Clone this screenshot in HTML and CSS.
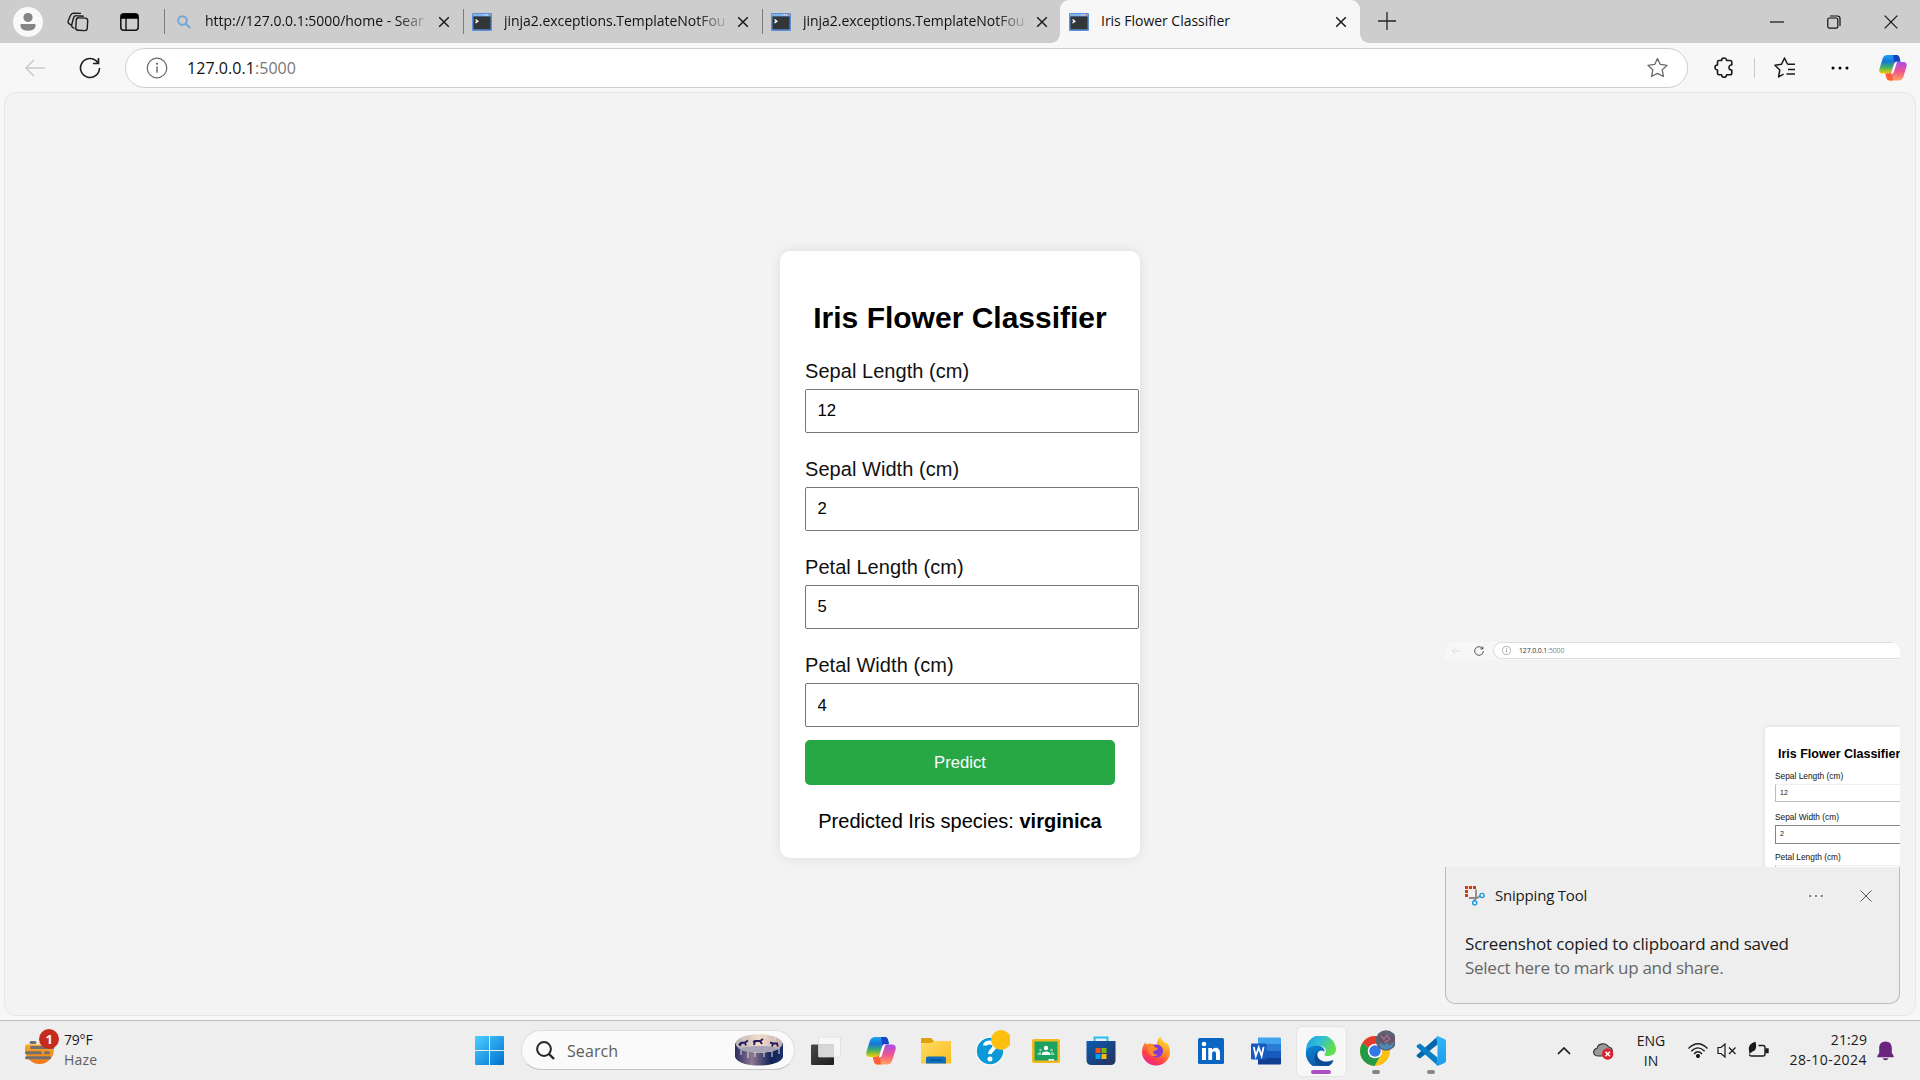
FILE: index.html
```html
<!DOCTYPE html>
<html lang="en">
<head>
<meta charset="utf-8">
<title>Iris Flower Classifier</title>
<link rel="stylesheet" href="styles.css">
</head>
<body>
<svg class="defs" width="0" height="0" aria-hidden="true">
  <defs>
    <linearGradient id="cpA" x1="0" y1="0" x2="0" y2="1"><stop offset="0" stop-color="#1ba3f0"/><stop offset=".35" stop-color="#1478d8"/><stop offset=".65" stop-color="#3fb06a"/><stop offset="1" stop-color="#f4d000"/></linearGradient>
    <linearGradient id="cpB" x1="0" y1="0" x2="0" y2="1"><stop offset="0" stop-color="#a84df0"/><stop offset=".5" stop-color="#ee5590"/><stop offset="1" stop-color="#ffa45c"/></linearGradient>
    <linearGradient id="winG" x1="0" y1="0" x2="1" y2="1"><stop offset="0" stop-color="#4cd0ff"/><stop offset="1" stop-color="#006fd0"/></linearGradient>
    <linearGradient id="sunG" x1="0" y1="0" x2="0" y2="1"><stop offset="0" stop-color="#f8c030"/><stop offset="1" stop-color="#f07818"/></linearGradient>
    <linearGradient id="tubG" x1="0" y1="0" x2="1" y2="0"><stop offset="0" stop-color="#2a2c60"/><stop offset=".35" stop-color="#8c7890"/><stop offset=".75" stop-color="#102458"/><stop offset="1" stop-color="#1c3068"/></linearGradient>
    <linearGradient id="rimG" x1="0" y1="0" x2="1" y2="0"><stop offset="0" stop-color="#b8b0b4"/><stop offset=".5" stop-color="#f2dcc8"/><stop offset="1" stop-color="#c4b0b0"/></linearGradient>
    <linearGradient id="folG" x1="0" y1="0" x2="1" y2="1"><stop offset="0" stop-color="#ffdb62"/><stop offset="1" stop-color="#fcbd22"/></linearGradient>
    <linearGradient id="stoG" x1="0" y1="0" x2="1" y2="1"><stop offset="0" stop-color="#0a5cb0"/><stop offset="1" stop-color="#27305c"/></linearGradient>
    <linearGradient id="tvG" x1="0" y1="0" x2="1" y2="1"><stop offset="0" stop-color="#4a4a4a"/><stop offset="1" stop-color="#1c1c1c"/></linearGradient>
    <linearGradient id="ffG" x1=".8" y1="0" x2=".25" y2="1"><stop offset="0" stop-color="#ffe63c"/><stop offset=".4" stop-color="#ff9422"/><stop offset=".75" stop-color="#ff3c50"/><stop offset="1" stop-color="#e8208c"/></linearGradient>
    <linearGradient id="edA" x1="0" y1="0" x2="1" y2=".4"><stop offset="0" stop-color="#1c98e0"/><stop offset=".5" stop-color="#30c0d8"/><stop offset="1" stop-color="#62e04a"/></linearGradient>
    <linearGradient id="edB" x1="0" y1="0" x2=".6" y2="1"><stop offset="0" stop-color="#0a88d8"/><stop offset="1" stop-color="#0f4f9c"/></linearGradient>
    <linearGradient id="vsG" x1="0" y1="0" x2="0" y2="1"><stop offset="0" stop-color="#32b4f6"/><stop offset="1" stop-color="#1e9cee"/></linearGradient>
    <symbol id="copilot" viewBox="0 0 30 28">
      <path d="M9 0h9.500c2 0 3 1.200 3.500 3l1 4h-3.500c-1.600 0-2.600.800-3.100 2.500L13.500 17c-.7 2.200-1.900 3-4 3H4c-3 0-4.400-2-3.600-5L3.600 4.500C4.500 1.500 6.300 0 9 0z" fill="url(#cpA)"/>
      <path d="M15 0h4c1.600 0 2.600 1.200 3 3l1 4.200h-3.500c-1.600 0-2.500.8-3 2.300z" fill="#1644c4"/>
      <path d="M21 27.500h-9.500c-2 0-3-1.200-3.500-3L6.800 20h3.100c1.900 0 3.100-1 3.700-3L16 10.500C16.600 8.500 17.600 7.500 20 7.500h6c3 0 4.400 2 3.600 5L26.400 23c-.9 3-2.700 4.500-5.400 4.500z" fill="url(#cpB)"/>
      <path d="M15 27.500h-3.500c-2 0-3-1.200-3.500-3L6.800 20h3.100c1.900 0 3.100-1 3.700-3z" fill="#ff6038"/>
      <path d="M16.300 9.500c.5-1.600 1.500-2.400 3.200-2.400L16 18c-.6 1.800-1.600 2.500-3.300 2.500z" fill="#fff"/>
    </symbol>
    <symbol id="term" viewBox="0 0 20 18">
      <rect width="20" height="18" rx="1" fill="#5b8fd6"/><rect x="1.500" y="3.500" width="17" height="12.800" fill="#333638"/>
      <path d="M1 1h18v2H1z" fill="#86b3ea"/><path d="M12.500 1.200h1.500v1.300h-1.500zM15 1.200h1v1.300h-1z" fill="#dfe9f7"/><path d="M17 1.200h1.600v1.300H17z" fill="#e66a6a"/>
      <path d="M3.500 6.500l2.300 1.700-2.300 1.700" fill="none" stroke="#fff" stroke-width="1.400"/>
    </symbol>
    <symbol id="x" viewBox="0 0 12 12"><path d="M1.200 1.200l9.600 9.600M10.800 1.200l-9.600 9.600" fill="none" stroke="currentColor" stroke-width="1.500"/></symbol>
    <symbol id="back" viewBox="0 0 20 18"><path d="M20 9H1M9 .8L1 9l8 8.200" fill="none" stroke="#c9c9c9" stroke-width="1.400"/></symbol>
    <symbol id="reload" viewBox="0 0 22 22"><path d="M20.500 11a9.500 9.500 0 1 1-3.500-7.400L19.300 6M19.500 1v5.500H14" fill="none" stroke="#1d1d1d" stroke-width="1.600"/></symbol>
    <symbol id="info" viewBox="0 0 22 22"><circle cx="11" cy="11" r="9.800" fill="none" stroke="#666" stroke-width="1.200"/><path d="M11 9.500v6.200" stroke="#555" stroke-width="1.300"/><circle cx="11" cy="6.800" r="1" fill="#555"/></symbol>
  </defs>
</svg>

<header class="tabstrip">
  <div class="lead">
    <svg class="avatar" viewBox="0 0 30 30"><circle cx="15" cy="15" r="15" fill="#f9f9f9"/><circle cx="15" cy="10.500" r="4.600" fill="#858585"/><path d="M7.500 17h15v2c0 3-3.500 4.700-7.500 4.700s-7.500-1.700-7.500-4.700z" fill="#858585"/></svg>
    <svg class="spaces" viewBox="0 0 22 20" fill="none" stroke="#1c1c1c" stroke-width="1.400"><rect x="9" y="6" width="11.500" height="12.500" rx="2.500" transform="rotate(3 15 12)"/><path d="M7.500 16.500l-1.500-.8C4.800 15 4.400 14 4.700 12.800L6.400 6.300C6.800 4.500 8 3.500 9.800 3.700l7 .6"/><path d="M4.200 13.200l-1.600-1C1.200 11.300.8 10 1.300 8.700L3.200 4C4 2 5 1.100 7 1.100l7 .3"/></svg>
    <svg class="tabmenu" viewBox="0 0 19 18"><rect x=".8" y=".8" width="17.400" height="16.400" rx="3" fill="none" stroke="#111" stroke-width="1.500"/><path d="M1 5.800V3.500Q1 1 3.500 1h12Q18 1 18 3.500v2.300z"/><path d="M6 5v12" stroke="#111" stroke-width="1.400"/></svg>
  </div>
  <div class="tab first">
    <svg class="fav search" viewBox="0 0 14 14" fill="none" stroke="#72a5d6" stroke-width="1.900"><circle cx="5.500" cy="5.500" r="4.300"/><path d="M8.700 8.700l4.500 4.500"/></svg>
    <span class="ttl long">http://127.0.0.1:5000/home - Sear</span>
    <svg class="close"><use href="#x"/></svg>
  </div>
  <div class="tab">
    <svg class="fav"><use href="#term"/></svg>
    <span class="ttl long">jinja2.exceptions.TemplateNotFou</span>
    <svg class="close"><use href="#x"/></svg>
  </div>
  <div class="tab">
    <svg class="fav"><use href="#term"/></svg>
    <span class="ttl long">jinja2.exceptions.TemplateNotFou</span>
    <svg class="close"><use href="#x"/></svg>
  </div>
  <div class="tab active">
    <svg class="fav"><use href="#term"/></svg>
    <span class="ttl">Iris Flower Classifier</span>
    <svg class="close"><use href="#x"/></svg>
  </div>
  <svg class="plus" viewBox="0 0 18 18"><path d="M9 0v18M0 9h18" stroke="#222" stroke-width="1.300"/></svg>
  <div class="wincontrols">
    <svg viewBox="0 0 14 14"><path d="M0 7h14" stroke="#111" stroke-width="1.200"/></svg>
    <svg viewBox="0 0 14 14" fill="none" stroke="#111" stroke-width="1.200"><rect x=".8" y="3" width="10" height="10.200" rx="1.600"/><path d="M3 1h7.500Q13 1 13 3.500V11"/></svg>
    <svg viewBox="0 0 14 14" fill="none" stroke="#111" stroke-width="1.200"><path d="M.7.700l12.600 12.600M13.300.7L.7 13.300"/></svg>
  </div>
</header>

<nav class="toolbar">
  <svg class="nav-back"><use href="#back"/></svg>
  <svg class="nav-reload"><use href="#reload"/></svg>
  <div class="address">
    <svg class="info"><use href="#info"/></svg>
    <span class="url">127.0.0.1<i>:5000</i></span>
    <svg class="star" viewBox="0 0 22 21" fill="none" stroke="#6a6a6a" stroke-width="1.400" stroke-linejoin="round"><path d="M11 1l3 6.300 7 .9-5.100 4.800 1.300 6.900L11 16.600l-6.200 3.300 1.300-6.900L1 8.200l7-.9z"/></svg>
  </div>
  <svg class="puzzle" viewBox="0 0 20 21" fill="none" stroke="#1a1a1a" stroke-width="1.600" stroke-linejoin="round"><path d="M3.500 5q0-1.500 1.500-1.500h2.600a2.500 2.500 0 0 1 5 0H16q1.800 0 1.800 1.800V8h-1a2.600 2.600 0 0 0 0 5h1v3q0 1.800-1.800 1.800h-3.400a2.500 2.500 0 0 1-5 0H5q-1.500 0-1.500-1.500v-3.300a2.500 2.500 0 0 1 0-5z"/></svg>
  <i class="tsep"></i>
  <svg class="favs" viewBox="0 0 22 21" fill="none" stroke="#1a1a1a" stroke-width="1.500" stroke-linejoin="round"><path d="M13.500 7.300L10.500 1 7.500 7.300.9 8.200 5.800 13l-1.200 6.900 5-2.700M13.500 7.300H21M14 12.500h7M12.500 17h8.500"/></svg>
  <svg class="more" viewBox="0 0 18 4"><circle cx="2" cy="2" r="1.500"/><circle cx="9" cy="2" r="1.500"/><circle cx="16" cy="2" r="1.500"/></svg>
  <svg class="cp"><use href="#copilot"/></svg>
</nav>

<main class="viewport">
  <section class="card">
    <h1>Iris Flower Classifier</h1>
    <form>
      <label>Sepal Length (cm)</label><input type="text" value="12">
      <label>Sepal Width (cm)</label><input type="text" value="2">
      <label>Petal Length (cm)</label><input type="text" value="5">
      <label>Petal Width (cm)</label><input type="text" value="4">
      <button type="button">Predict</button>
    </form>
    <p class="result">Predicted Iris species: <b>virginica</b></p>
  </section>
</main>

<footer class="taskbar">
  <div class="weather">
    <svg viewBox="0 0 35 36"><circle cx="14.500" cy="20.500" r="14.500" fill="url(#sunG)"/><path d="M0 0h35v15.500H0z" fill="#eee"/><path d="M6 13.500h4M6.500 18.500H28M1.500 23.700h14M20.500 23.700h3M1.500 28.700h23" stroke="#707070" stroke-width="3" stroke-linecap="round"/><circle cx="24" cy="10" r="10" fill="#c52b1e"/><text x="24" y="15" text-anchor="middle">1</text></svg>
    <div><span class="deg">79°F</span><span class="haze">Haze</span></div>
  </div>
  <svg class="start" viewBox="0 0 29 29"><path d="M1 0h13v14H0V1q0-1 1-1zM15 0h13q1 0 1 1v13H15zM0 15h14v14H1q-1 0-1-1zM15 15h14v13q0 1-1 1H15z" fill="url(#winG)"/></svg>
  <div class="searchbox">
    <svg class="lens" viewBox="0 0 19 19" fill="none" stroke="#262626" stroke-width="2"><circle cx="8" cy="8" r="6.900"/><path d="M13 13l5 5" stroke-width="2.400"/></svg>
    <span>Search</span>
    <svg class="tub" viewBox="0 0 48 32"><path d="M0 9v14c2 6 13 8.500 24 8.500S46 29 48 23V9z" fill="url(#tubG)"/><ellipse cx="24" cy="9.500" rx="23.500" ry="9.300" fill="url(#rimG)"/><path d="M3 14.500Q10 12 24 12t21 2.500Q38 18.500 24 18.500T3 14.500z" fill="#a9a5b8"/><path d="M6 16v5M13 18v6M20 18v5M29 18v5M37 17v6M44 14v6M17 1v3M31 1v3M9 3v3M40 3v3" stroke="#e4dfe2"/><path d="M4 11l2-2 4-.5 3-2M6 9l-1 3M10 9l1 2.500M18 8l2-1h5l3-2M20 7l-1 4M25 7l2 3M35 8.500l3 1h5M38 10l-1 2.500M42 10l1 2.500" stroke="#251c60" stroke-width="1.900" fill="none"/></svg>
  </div>
  <div class="apps">
    <div class="app"><svg viewBox="0 0 30 28"><rect y="7.500" width="23" height="20.500" rx="1" fill="url(#tvG)"/><path d="M7.500 7.500H23V20H7.500z" fill="#a7a7a7"/><rect x="7.500" width="22" height="20" rx="1" fill="#fff" fill-opacity=".55" stroke="#dadada" stroke-width=".7"/></svg></div>
    <div class="app"><svg viewBox="0 0 30 28"><use href="#copilot"/></svg></div>
    <div class="app"><svg viewBox="0 0 30 27"><path d="M0 1.500Q0 .5 1 .5h9l3 3h16q1 0 1 1V10H0z" fill="#dfa008"/><path d="M0 5.500h10l3-2h16q1 0 1 1v21.500H0z" fill="url(#folG)"/><path d="M5 26v-5q0-2 2-2h16q2 0 2 2v5z" fill="#0d6fc0"/><path d="M9 22.700h12" stroke="#07457f"/></svg></div>
    <div class="app"><svg class="big" viewBox="0 0 38 38"><circle cx="18" cy="21" r="14.300" fill="#fff"/><circle cx="18" cy="21" r="13.200" fill="#0a98d8"/><path d="M13 15.500c0-4 9.500-4.500 9.500.5 0 4-4.500 3.500-4.500 8" fill="none" stroke="#fff" stroke-width="4"/><circle cx="18" cy="29" r="2.500" fill="#fff"/><circle cx="29" cy="10" r="10" fill="#fdc010"/></svg></div>
    <div class="app"><svg viewBox="0 0 30 26"><rect x="1" y="1" width="28" height="24" rx="2" fill="#f2b91c"/><rect x="3.500" y="3.500" width="23" height="19" fill="#1ca260"/><g fill="#fff"><circle cx="15" cy="10" r="2.200"/><path d="M10.500 17q0-3.500 4.500-3.500t4.500 3.500z"/><g opacity=".5"><circle cx="9.500" cy="12" r="1.300"/><circle cx="20.500" cy="12" r="1.300"/><path d="M6.500 17q0-3 3.500-3v3zM23.500 17q0-3-3.500-3v3z"/></g><path d="M17.500 21h5.500v1.600h-5.500z"/></g></svg></div>
    <div class="app"><svg viewBox="0 0 30 30"><path d="M8.500 6V1.500h13V6" fill="none" stroke="#25bff0" stroke-width="2"/><path d="M.5 5h29v19q0 5-5 5h-19q-5 0-5-5z" fill="url(#stoG)"/><path d="M9.500 12h5v5h-5z" fill="#f25022"/><path d="M15.500 12h5v5h-5z" fill="#7fba00"/><path d="M9.500 18h5v5h-5z" fill="#00a4ef"/><path d="M15.500 18h5v5h-5z" fill="#ffb900"/></svg></div>
    <div class="app"><svg viewBox="0 0 30 30"><path d="M1 16C1 11 3 8 4.500 6c0 1.500.5 2 1 2.500C7 7.500 9 7 11 8c1 0 3 0 5 1-.5-4 1.500-7 3.500-8.500C20 4 23 5 25 8c.3-1 0-1.500 0-2 3 3 4 6.500 4 10a14 13.500 0 0 1-28 0z" fill="url(#ffG)"/><circle cx="15.500" cy="15" r="6.500" fill="#8038d8"/><path d="M5.500 8.500C9 7 12 8 13 10c1 1.700 2 1.500 4 2-1 3-3 2-4.500 3.500S14 19 17 18.500c-4 3.500-9 1-9.500-3S6 11 5.500 8.500z" fill="#ff8a2a"/></svg></div>
    <div class="app"><svg viewBox="0 0 30 30"><rect x="2" y="2" width="26" height="26" rx="1.500" fill="#0a66c2"/><circle cx="8" cy="8" r="2.300" fill="#fff"/><path d="M6 12h4v12H6zM12.300 12H16v1.700c2-3 8-3 8 3V24h-4v-6.300c0-3.400-3.900-3.200-3.900 0V24h-3.800z" fill="#fff"/></svg></div>
    <div class="app"><svg viewBox="0 0 30 28"><path d="M7 .5h22q1 0 1 1V7H7z" fill="#41a5ee"/><path d="M7 7h23v7H7z" fill="#2b7cd3"/><path d="M7 14h23v7H7z" fill="#185abd"/><path d="M7 21h23v5.500q0 1-1 1H7z" fill="#103f91"/><rect y="6.500" width="15.500" height="16" rx="1" fill="#185abd"/><path d="M2.800 10l2 9 2.900-8.500 2.900 8.500 2-9" fill="none" stroke="#fff" stroke-width="1.800"/></svg></div>
    <div class="app current"><svg viewBox="0 0 30 30"><path d="M0 15A15 15 0 0 1 30 13c0 5-4 7-8.500 7-3 0-3.500-1-2.500-2.500 2.500-4-1-7.500-6-7.500-6 0-11 2-13 5z" fill="url(#edA)"/><path d="M0 15C2 11 7 9.500 12 9.800c4 .2 7 3 6.500 6C12 11 8 21 15 25.500c4 2.500 9 2 13-1A15 15 0 0 1 0 15z" fill="url(#edB)"/><path d="M11 16c-1 6 4 10 10 9.500 3-.3 5-1.500 6.500-1.500-6 8-18 7.500-19-2 0-3 1-5 2.500-6z" fill="#0c4a94"/></svg><i></i></div>
    <div class="app running"><svg class="big" viewBox="0 0 38 38"><circle cx="18" cy="21" r="15" fill="#fbc116"/><path d="M18 21L5 13.500A15 15 0 0 1 31 13.500H18z" fill="#e33b2e"/><path d="M18 21L5 13.500A15 15 0 0 0 17.500 36l6.500-11.500z" fill="#229a48"/><circle cx="18" cy="21" r="7.300" fill="#fff"/><circle cx="18" cy="21" r="5.800" fill="#3578e5"/><circle cx="29" cy="10.500" r="10.300" fill="#586474"/><path d="M21 8l6-6 5 4 6 2-3 6-6-3-5 5z" fill="#6d5268"/><path d="M22 14q3-3 5 2l3-4q1 4 3 3l4-3q-1 7-8 7.500-5 0-7-5.500z" fill="#4b88b8"/><path d="M24 6l3 3 3-4 3 5M27 12l5-2" stroke="#a07898" stroke-width="1.200" fill="none"/></svg><i></i></div>
    <div class="app running"><svg viewBox="0 0 30 30"><path d="M21.500 8.500L4 22.500 1 20.800q-1-1 0-2L21.500.5z" fill="#0069ac"/><path d="M21.500 21.500L4 7.500 1 9.200q-1 1 0 2L21.500 29.500z" fill="#0a7fc8"/><path d="M21.500 0l7 3q1.500.7 1.500 2.300v19.400q0 1.600-1.500 2.300l-7 3-1.500-1.500 1.500-6.500v-14L20 1.500z" fill="url(#vsG)"/></svg><i></i></div>
  </div>
  <div class="tray">
    <svg class="chev" viewBox="0 0 14 8"><path d="M1 7l6-6 6 6" fill="none" stroke="#1a1a1a" stroke-width="1.700"/></svg>
    <svg class="drive" viewBox="0 0 21 18"><path d="M5 14C1 14 0 11 1 8.500 1.500 7 3 6.500 4 6.500 5 1 13 0 15.500 5 18 5 20 7.500 19 11l-6 3z" fill="#9a9a9a" stroke="#333" stroke-width="1.200"/><circle cx="14.700" cy="12" r="5.700" fill="#da2032"/><path d="M12.500 9.800l4.400 4.400m0-4.400l-4.400 4.400" stroke="#fff" stroke-width="1.600"/></svg>
    <div class="lang"><span>ENG</span><span>IN</span></div>
    <svg class="wifi" viewBox="0 0 20 15" fill="none" stroke="#1a1a1a" stroke-width="1.300"><path d="M.5 5.500q9.500-9.500 19 0M3.300 8.300q6.700-7 13.400 0M6 11q4-4.500 8 0"/><circle cx="10" cy="13" r="1.400" fill="#1a1a1a"/></svg>
    <svg class="vol" viewBox="0 0 20 15" fill="none" stroke="#1a1a1a" stroke-width="1.200"><path d="M1 4.500h3l4-3.500v13L4 10.500H1z"/><path d="M12 4.500l6.500 6.500M18.500 4.500L12 11"/></svg>
    <svg class="bat" viewBox="0 0 21 17" fill="none" stroke="#1a1a1a" stroke-width="1.400"><path d="M10.500 4.500H15q2 0 2 2V13q0 2-2 2H3.500q-2 0-2-1.700"/><path d="M18 8h2v3.500h-2z" fill="#1a1a1a"/><path d="M1 9.500C0 5 3 2 7.500.8 9 6 8 10 4.500 10.500L1.500 13z" fill="#1a1a1a" stroke="none"/></svg>
    <div class="clock"><span>21:29</span><span class="date">28-10-2024</span></div>
    <svg class="bell" viewBox="0 0 17 20"><path d="M8.500.5c4 0 6.300 2.800 6.300 6.500v5l1.900 3v1.300H.3V15l1.900-3V7C2.200 3.300 4.500.5 8.500.5zM5.500 17.200h6q-.8 2-3 2t-3-2z" fill="#6b2580"/></svg>
  </div>
</footer>

<aside class="toast">
  <div class="thumb">
    <div class="tbar">
      <svg class="tb"><use href="#back"/></svg>
      <svg class="tr"><use href="#reload"/></svg>
      <div class="taddr"><svg><use href="#info"/></svg><span>127.0.0.1<i>:5000</i></span></div>
    </div>
    <div class="tcard">
      <b>Iris Flower Classifier</b>
      <span>Sepal Length (cm)</span><div>12</div>
      <span>Sepal Width (cm)</span><div class="dark">2</div>
      <span>Petal Length (cm)</span><div></div>
    </div>
  </div>
  <div class="note">
    <div class="nhead">
      <svg class="snip" viewBox="0 0 20 20" fill="none"><path d="M0 0h3v3H0zM4 0h3v3H4zM8 0h3v3H8zM0 4h3v3H0zM0 8h3v3H0z" fill="#d83b01"/><path d="M11 3.500v8.500L9 15M4 12h8l3-2" stroke="#8b8b8b" stroke-width="1.800"/><circle cx="17" cy="9.500" r="2.100" stroke="#1c9be0" stroke-width="1.400"/><circle cx="9.700" cy="16.800" r="2.100" stroke="#1c9be0" stroke-width="1.400"/></svg>
      <span>Snipping Tool</span>
      <svg class="ndots" viewBox="0 0 14 4" fill="#555"><circle cx="1.200" cy="2" r=".9"/><circle cx="7" cy="2" r=".9"/><circle cx="12.800" cy="2" r=".9"/></svg>
      <svg class="nx" viewBox="0 0 12 12"><path d="M.5.5l11 11M11.500.5l-11 11" stroke="#555" stroke-width="1"/></svg>
    </div>
    <p class="l1">Screenshot copied to clipboard and saved</p>
    <p class="l2">Select here to mark up and share.</p>
  </div>
</aside>
</body>
</html>
```
FILE: styles.css
```css
* { box-sizing: border-box; }
body {
  margin: 0;
  width: 1920px;
  height: 1080px;
  overflow: hidden;
  display: flex;
  flex-direction: column;
  background: #f7f7f7;
  color: #1a1a1a;
  font-family: "Open Sans", "Noto Sans", sans-serif;
  position: relative;
}
svg { display: block; flex: none; }
.defs { position: absolute; }
i { font-style: normal; }

/* tab strip */
.tabstrip { height: 43px; flex: none; background: #cdcdcd; display: flex; align-items: center; }
.lead { width: 164px; padding-left: 13px; display: flex; align-items: center; }
.avatar { width: 30px; height: 30px; }
.spaces { width: 22px; height: 20px; margin-left: 24px; }
.tabmenu { width: 19px; height: 18px; margin-left: 31px; }
.tab { width: 299px; height: 43px; display: flex; align-items: center; padding-left: 9px; position: relative; }
.tab::before { content: ""; position: absolute; left: 0; top: 9px; width: 1px; height: 25px; background: #7c7c7c; }
.tab.active::before { display: none; }
.tab.first { padding-left: 13px; }
.tab .fav { width: 20px; height: 18px; margin-top: 1px; }
.tab .fav.search { width: 14px; height: 14px; margin-right: 2px; }
.ttl {
  width: 222px; margin-left: 12px; white-space: nowrap;
  font-size: 14px; line-height: 20px; letter-spacing: -.03px; color: #111; margin-top: -2px;
}
.ttl.long {
  -webkit-mask-image: linear-gradient(90deg, #000 193px, transparent 226px);
  mask-image: linear-gradient(90deg, #000 193px, transparent 226px);
}
.close { width: 12px; height: 12px; margin-left: 11px; color: #1a1a1a; }
.tab.active { width: 300px; background: #f7f7f7; border-radius: 9px 9px 0 0; margin-left: -1px; padding-left: 9px; }
.tab.active::after {
  content: ""; position: absolute; left: -9px; right: -9px; bottom: 0; height: 9px;
  background:
    radial-gradient(circle at 0 0, transparent 8.500px, #f7f7f7 9px) left / 9px 9px no-repeat,
    radial-gradient(circle at 100% 0, transparent 8.500px, #f7f7f7 9px) right / 9px 9px no-repeat;
}
.tab.active .close { margin-left: 12px; }
.plus { width: 18px; height: 18px; margin-left: 18px; margin-top: -1px; }
.wincontrols { margin-left: auto; display: flex; gap: 43px; padding-right: 22px; }
.wincontrols svg { width: 14px; height: 14px; }

/* toolbar */
.toolbar { height: 49px; flex: none; display: flex; align-items: center; padding-left: 25px; }
.nav-back { width: 20px; height: 18px; }
.nav-reload { width: 22px; height: 22px; margin-left: 34px; }
.address {
  margin-left: 24px; width: 1563px; height: 40px; border: 1px solid #cfcfcf; border-radius: 20px;
  background: #fff; display: flex; align-items: center; padding: 0 19px 0 20px;
}
.address .info { width: 22px; height: 22px; }
.url { margin-left: 19px; font-size: 16px; letter-spacing: .05px; color: #111; }
.url i { color: #777; }
.star { width: 21px; height: 21px; margin-left: auto; }
.puzzle { width: 20px; height: 21px; margin-left: 26px; }
.tsep { width: 1px; height: 20px; background: #c8c8c8; margin-left: 20px; }
.favs { width: 22px; height: 21px; margin-left: 19px; }
.more { width: 18px; height: 4px; margin-left: 35px; }
.cp { width: 28px; height: 26px; margin-left: 30px; }

/* web page */
.viewport {
  margin: 0 4px 4px; height: 924px; flex: none; background: #f3f3f3;
  border: 1px solid #e6e6e6; border-radius: 12px; display: flex; justify-content: center; align-items: center;
}
.card {
  width: 360px; height: 607px; background: #fff; border-radius: 10px; padding: 25px;
  box-shadow: 0 0 12px rgba(0,0,0,.1); font-family: "Liberation Sans", Arial, sans-serif; color: #000;
}
.card h1 { font-size: 30px; line-height: 35px; margin: 24px 0 25px; text-align: center; white-space: nowrap; }
.card form { display: flex; flex-direction: column; align-items: flex-start; }
.card label { font-size: 20px; line-height: 22px; margin-bottom: 7px; color: #111; letter-spacing: .05px; }
.card input {
  width: 334px; height: 44px; border: 1px solid #767676; border-radius: 2px; padding: 1px 11.500px 0;
  margin: 0 0 25.200px; font: 16.670px "Liberation Sans", Arial, sans-serif; color: #000; background: #fff;
}
.card input:last-of-type { margin-top: .4px; }
.card button {
  width: 310px; height: 45px; border: 0; border-radius: 5px; background: #28a745; color: #fff;
  font: 16.670px "Liberation Sans", Arial, sans-serif; margin-top: -12.200px; padding: 0;
}
.result { margin: 25px 0 0; font-size: 20px; line-height: 23px; text-align: center; white-space: nowrap; }

/* taskbar */
.taskbar {
  height: 60px; flex: none; background: #eee; border-top: 1px solid #bdbdbd;
  display: flex; align-items: center; padding-left: 25px;
}
.weather { width: 450px; display: flex; align-items: center; font-size: 14px; letter-spacing: -.2px; }
.weather svg { width: 35px; height: 36px; margin-top: -8px; }
.weather text { font: bold 13px "Open Sans", sans-serif; fill: #fff; }
.weather div { margin-left: 4px; display: flex; flex-direction: column; line-height: 20px; margin-top: -2px; }
.haze { color: #5f5f5f; letter-spacing: .2px; }
.deg { letter-spacing: -.2px; }
.start { width: 29px; height: 29px; }
.searchbox {
  width: 274px; height: 40px; margin-left: 17px; margin-top: -1px; border-radius: 20px; background: #fafafa;
  border: 1px solid #dedede; border-bottom-color: #c4c4c4; display: flex; align-items: center;
  padding: 0 11px 0 14px; font-size: 16px; color: #5c5c5c;
}
.lens { width: 19px; height: 19px; }
.searchbox span { margin: 1px 0 0 12px; letter-spacing: .1px; }
.tub { width: 48px; height: 32px; margin-left: auto; }
.apps { display: flex; margin-left: 3px; }
.app { width: 55px; height: 59px; display: flex; align-items: center; justify-content: center; position: relative; }
.app svg { width: 30px; height: 30px; }
.app svg.big { width: 38px; height: 38px; margin-top: -4px; }
.app.current::before {
  content: ""; position: absolute; left: 3px; top: 5px; width: 49px; height: 49px; background: #f7f7f7;
  border: 1px solid #e4e4e4; border-radius: 6px;
}
.app.current svg { position: relative; }
.app i { position: absolute; bottom: 6px; left: 24px; width: 8px; height: 4px; border-radius: 2px; background: #868686; }
.app.current i { left: 18px; width: 20px; background: #ae4fc4; }
.tray { margin-left: auto; padding-right: 26px; display: flex; align-items: center; font-size: 14px; line-height: 20px; }
.tray span { display: block; }
.chev { width: 14px; height: 8px; }
.drive { width: 21px; height: 18px; margin-left: 22px; }
.lang { width: 40px; text-align: center; margin-left: 17px; }
.wifi { width: 20px; height: 15px; margin-left: 17px; }
.vol { width: 20px; height: 15px; margin-left: 9px; }
.bat { width: 21px; height: 17px; margin-left: 11px; margin-top: -3px; }
.clock { width: 90px; margin-left: 8px; text-align: right; letter-spacing: .1px; margin-top: -2px; }
.clock .date { letter-spacing: .45px; }
.bell { width: 17px; height: 20px; margin-left: 10px; }

/* screenshot notification */
.toast { position: absolute; left: 1445px; top: 642px; width: 455px; height: 362px; display: flex; flex-direction: column; }
.thumb { height: 225px; overflow: hidden; border-radius: 10px 10px 0 0; background: #f3f3f3; flex: none; }
.tbar { height: 18px; background: #f7f7f7; display: flex; align-items: center; padding-left: 7px; }
.tb { width: 8px; height: 8px; }
.tr { width: 10px; height: 10px; margin-left: 14px; }
.taddr {
  flex: 1; height: 17px; margin: -1px 0 0 9px; border: 1px solid #ddd; border-right: 0; border-radius: 9px 0 0 9px;
  background: #fff; display: flex; align-items: center; padding-left: 8px; font-size: 7px; letter-spacing: -.15px;
}
.taddr svg { width: 9px; height: 9px; }
.taddr span { margin-left: 8px; line-height: 10px; color: #333; }
.taddr i { color: #888; }
.tcard {
  margin: 67px 0 0 320px; height: 150px; background: #fff; border-radius: 4px 0 0 0; padding: 20px 0 0 10px;
  box-shadow: 0 0 5px rgba(0,0,0,.1); display: flex; flex-direction: column;
  font-family: "Liberation Sans", Arial, sans-serif; font-size: 8.350px; color: #111; white-space: nowrap;
}
.tcard b { font-size: 12.500px; line-height: 14px; margin: 0 0 9px 3px; color: #000; }
.tcard span { line-height: 12px; margin-bottom: 2px; }
.tcard div {
  height: 18px; flex: none; border: 1px solid #bdbdbd; border-top-color: #eee; border-right: 0;
  padding-left: 4px; line-height: 16px; font-size: 7px; margin-bottom: 8.500px;
}
.tcard div.dark { border-color: #858585; height: 19px; margin-bottom: 7.500px; }
.note { flex: 1; background: #eee; border: 1px solid #bcbcbc; border-top: 0; border-radius: 0 0 10px 10px; padding: 19px 19px 0; }
.nhead { display: flex; align-items: center; height: 20px; font-size: 15px; }
.snip { width: 20px; height: 20px; }
.nhead span { margin: -2px 0 0 10px; letter-spacing: -.2px; }
.ndots { width: 14px; height: 4px; margin-left: auto; }
.nx { width: 12px; height: 12px; margin-left: 37px; margin-right: 8px; }
.note p { margin: 0; line-height: 24px; font-size: 17px; white-space: nowrap; }
.note .l1 { margin-top: 26px; letter-spacing: -.18px; }
.note .l2 { color: #666; letter-spacing: -.27px; }
```
